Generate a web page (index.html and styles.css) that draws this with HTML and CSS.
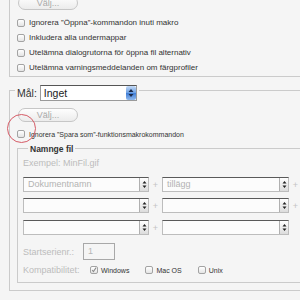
FILE: index.html
```html
<!DOCTYPE html>
<html lang="sv">
<head>
    <meta charset="UTF-8">
    <meta name="viewport" content="width=device-width, initial-scale=1.0">
    <title>Batch</title>
    <link rel="stylesheet" href="styles.css">
</head>
<body>
<div class="page">
    <div class="group top-group">
        <button class="pill">Välj...</button>
        <ul class="checks">
            <li><span class="box"></span>Ignorera ”Öppna”-kommandon inuti makro</li>
            <li><span class="box"></span>Inkludera alla undermappar</li>
            <li><span class="box"></span>Utelämna dialogrutorna för öppna fil alternativ</li>
            <li><span class="box"></span>Utelämna varningsmeddelanden om färgprofiler</li>
        </ul>
    </div>

    <div class="group target">
        <div class="legend">
            <span class="legend-label">Mål:</span>
            <div class="popup">
                <span class="value">Inget</span>
                <span class="aqua">
                    <svg width="6" height="10" viewBox="0 0 6 10"><path d="M0.5 4 L3 1 L5.5 4 Z M0.5 6 L3 9 L5.5 6 Z" fill="#1b2a4a"/></svg>
                </span>
            </div>
        </div>
        <button class="pill">Välj...</button>
        <div class="check-row"><span class="box"></span>Ignorera ”Spara som”-funktionsmakrokommandon</div>

        <div class="group naming">
            <div class="legend legend-bold">Namnge fil</div>
            <div class="example">Exempel: MinFil.gif</div>
            <div class="name-row">
                <div class="combo"><span class="value">Dokumentnamn</span><span class="stepper"><svg width="5" height="9" viewBox="0 0 5 9"><path d="M0.5 3.5 L2.5 1 L4.5 3.5 Z M0.5 5.5 L2.5 8 L4.5 5.5 Z" fill="#222"/></svg></span></div>
                <span class="plus">+</span>
                <div class="combo wide"><span class="value">tillägg</span><span class="stepper"><svg width="5" height="9" viewBox="0 0 5 9"><path d="M0.5 3.5 L2.5 1 L4.5 3.5 Z M0.5 5.5 L2.5 8 L4.5 5.5 Z" fill="#222"/></svg></span></div>
                <span class="plus">+</span>
            </div>
            <div class="name-row">
                <div class="combo"><span class="value"></span><span class="stepper"><svg width="5" height="9" viewBox="0 0 5 9"><path d="M0.5 3.5 L2.5 1 L4.5 3.5 Z M0.5 5.5 L2.5 8 L4.5 5.5 Z" fill="#222"/></svg></span></div>
                <span class="plus">+</span>
                <div class="combo wide"><span class="value"></span><span class="stepper"><svg width="5" height="9" viewBox="0 0 5 9"><path d="M0.5 3.5 L2.5 1 L4.5 3.5 Z M0.5 5.5 L2.5 8 L4.5 5.5 Z" fill="#222"/></svg></span></div>
                <span class="plus">+</span>
            </div>
            <div class="name-row last">
                <div class="combo"><span class="value"></span><span class="stepper"><svg width="5" height="9" viewBox="0 0 5 9"><path d="M0.5 3.5 L2.5 1 L4.5 3.5 Z M0.5 5.5 L2.5 8 L4.5 5.5 Z" fill="#222"/></svg></span></div>
                <span class="plus">+</span>
                <div class="combo wide"><span class="value"></span><span class="stepper"><svg width="5" height="9" viewBox="0 0 5 9"><path d="M0.5 3.5 L2.5 1 L4.5 3.5 Z M0.5 5.5 L2.5 8 L4.5 5.5 Z" fill="#222"/></svg></span></div>
            </div>
            <div class="serial">
                <span class="field-label">Startserienr.:</span>
                <span class="num">1</span>
            </div>
            <div class="compat">
                <span class="field-label compat-label">Kompatibilitet:</span>
                <span class="opt"><span class="box checked"><svg width="8" height="8" viewBox="0 0 8 8"><path d="M1.5 4 L3.2 6.2 L6.8 0.8" fill="none" stroke="#8c8c8c" stroke-width="1.4"/></svg></span>Windows</span>
                <span class="opt"><span class="box"></span>Mac OS</span>
                <span class="opt"><span class="box"></span>Unix</span>
            </div>
        </div>
    </div>

    <div class="dock"><span class="dock-bar"></span><span class="dock-tip"></span></div>
    <span class="annotation"></span>
</div>
</body>
</html>
```

FILE: styles.css
```css
* {
    box-sizing: border-box;
}
body {
    margin: 0;
    background-color: #f5f5f5;
    font-family: "Liberation Sans", Arial, sans-serif;
    color: #333;
    overflow: hidden;
}
.page {
    position: relative;
    width: 330px;
    height: 300px;
}
.group {
    margin-left: 9px;
    border: 1px solid #cbcbcb;
    border-right: none;
}
.top-group {
    margin-top: -4px;
    border-top: none;
    padding: 0 0 1px 7px;
}
.pill {
    display: block;
    width: 60px;
    height: 14px;
    margin: 0 0 0 1px;
    padding: 0;
    border: 1px solid #c6c6c6;
    border-radius: 7px;
    background: linear-gradient(#fefefe, #ececec);
    color: #a9a9a9;
    font: 9px/12px "Liberation Sans", Arial, sans-serif;
    text-align: center;
}
.checks {
    list-style: none;
    margin: 5px 0 0;
    padding: 0;
}
.checks li {
    display: flex;
    align-items: center;
    height: 15px;
    font-size: 8px;
    white-space: nowrap;
}
.box {
    flex: none;
    display: flex;
    align-items: center;
    justify-content: center;
    width: 8px;
    height: 8px;
    margin-right: 4px;
    border: 1px solid #a3a3a3;
    border-radius: 2px;
    background: linear-gradient(#fff, #e4e4e4);
}
.box.checked {
    overflow: visible;
}
.target {
    margin-top: 13px;
    padding: 0 0 7px 7px;
}
.legend {
    display: flex;
    align-items: center;
    width: max-content;
    height: 16px;
    margin: -6px 0 0 -2px;
    padding: 0 2px;
    background-color: #f5f5f5;
}
.legend-label {
    margin-right: 3px;
    font-size: 10.5px;
    color: #333;
}
.popup {
    display: flex;
    align-items: center;
    width: 97px;
    height: 16px;
    padding-left: 3px;
    border: 1px solid #9a9a9a;
    border-top-color: #555;
    background-color: #fff;
    font-size: 10.5px;
    color: #222;
}
.popup .value {
    flex: 1;
}
.aqua {
    display: flex;
    align-items: center;
    justify-content: center;
    width: 10px;
    height: 14px;
    border-radius: 2px;
    background: linear-gradient(#c4daf6, #6a9fe4 50%, #3f7dd6 51%, #8fb9ee);
}
.target > .pill {
    margin-top: 7px;
}
.check-row {
    display: flex;
    align-items: center;
    height: 12px;
    margin-top: 6px;
    font-size: 7px;
    white-space: nowrap;
}
.naming {
    margin: 8px 0 0 0;
    padding: 0 0 6px 5px;
}
.legend-bold {
    height: 11px;
    margin: -6px 0 0 5px;
    font-size: 8.5px;
    font-weight: bold;
    color: #333;
}
.example {
    margin-top: 3px;
    line-height: 12px;
    font-size: 9px;
    color: #bcbcbc;
}
.name-row {
    display: flex;
    align-items: center;
    margin-top: 6px;
}
.example + .name-row {
    margin-top: 8px;
}
.name-row.last {
    margin-top: 7px;
}
.combo {
    display: flex;
    width: 126px;
    height: 15px;
    padding-left: 4px;
    border: 1px solid #bdbdbd;
    border-top-color: #5a5a5a;
    background-color: #fcfcfc;
    font-size: 9px;
    color: #b3b3b3;
}
.combo.wide {
    width: 127px;
}
.combo .value {
    flex: 1;
    line-height: 13px;
}
.stepper {
    display: flex;
    align-items: center;
    justify-content: center;
    width: 9px;
    border-left: 1px solid #b0b0b0;
    background: linear-gradient(#fff, #dcdcdc);
}
.plus {
    width: 13px;
    text-align: center;
    font-size: 9px;
    color: #c3c3c3;
}
.serial {
    display: flex;
    align-items: center;
    margin-top: 8px;
    height: 17px;
}
.field-label {
    width: 60px;
    font-size: 9px;
    color: #bcbcbc;
    white-space: nowrap;
}
.num {
    width: 32px;
    height: 17px;
    padding-left: 4px;
    border: 1px solid #a8a8a8;
    font-size: 9px;
    line-height: 15px;
    color: #b5b5b5;
}
.compat {
    display: flex;
    align-items: center;
    gap: 16px;
    height: 12px;
    margin-top: 4px;
}
.compat-label {
    width: 51px;
}
.opt {
    display: flex;
    align-items: center;
    font-size: 7px;
    color: #333;
}
.opt .box {
    margin-right: 3px;
}
.dock {
    display: flex;
    gap: 3px;
    margin: 6px 0 0 43px;
}
.dock-bar {
    width: 87px;
    height: 10px;
    border-radius: 2px 2px 0 0;
    background-color: #1c1c1c;
}
.dock-tip {
    width: 7px;
    height: 10px;
    background-color: #a9c2d8;
}
.annotation {
    position: absolute;
    left: 7px;
    top: 118px;
    width: 29px;
    height: 29px;
    border: 1px solid #d55b66;
    border-radius: 50%;
}
```
